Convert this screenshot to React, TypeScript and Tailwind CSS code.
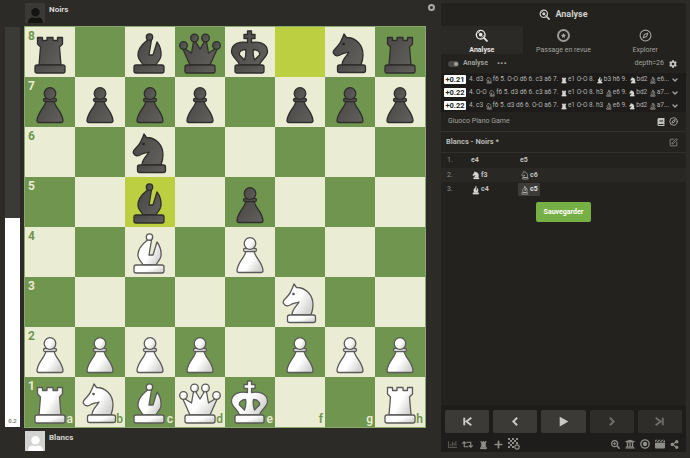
import type { ReactNode } from 'react'
import { Compass, SquarePen, ChevronDown } from 'lucide-react'
import { FaClapperboard } from 'react-icons/fa6'
import {
  FaBook,
  FaChartBar,
  FaCog,
  FaPlus,
  FaRetweet,
  FaSearchPlus,
  FaShareAlt,
  FaStar,
  FaUniversity,
  FaUser,
} from 'react-icons/fa'

type PieceType = 'p' | 'r' | 'n' | 'b' | 'q' | 'k'
type Tone = 'w' | 'b' | 'solid' | 'hollow' | 'muted'

const BASES: Record<PieceType, [number, number, number, number] | null> = {
  p: null,
  r: [10, 38, 30, 8],
  n: [12.5, 38, 28, 7.5],
  b: [9, 38, 30, 8],
  q: [10, 38, 30, 8],
  k: [10, 38, 29, 8],
}

const BODIES: Record<PieceType, string> = {
  p: 'M21 23 C21 30 13 34 12 43.5 Q12 45.5 14 45.5 H36 Q38 45.5 38 43.5 C37 34 29 30 29 23 Z',
  r: 'M12.5 10.5 H17.5 V13.5 H22 V10.5 H28 V13.5 H32.5 V10.5 H37.5 V17 L34.5 20 L36 38 H14 L15.5 20 L12.5 17 Z',
  n: 'M19 7 L21.5 10.5 C31 10.5 38 18 38 28 C38 32 37 35 36 38 H17 C17 32 22 29 24 25 C21 26 18 26 16 27.5 C13 29.5 10 29 9 27 C7.5 25.5 8 24 10 22 C13 19 15 17 16 14 C17 12 18 10 19 7 Z',
  b: 'M22.5 13 C16 18 12.5 24 13 29 C13.5 33 17 35 18 38 H31 C32 35 35.5 33 36 29 C36.5 24 35 19 32 15 L28 28 H24 L26.5 13 Z',
  q: 'M7 20 L15 38 H35 L43 20 L33.5 26 L31 12 L25 22 L19 12 L16.5 26 Z',
  k: 'M22.5 4 H26.5 V7.5 H30 V11.5 H26.5 V15.5 C32 14.5 42.5 15 42.5 24.5 C42.5 30 36 32.5 34.5 38 H14.5 C13 32.5 6.5 30 6.5 24.5 C6.5 15 17 14.5 22.5 15.5 V11.5 H19 V7.5 H22.5 Z M20.5 22.5 C17 22.5 13.5 25 14.5 28 L19.5 33 C20.5 30 21.5 26 20.5 22.5 Z M28.5 22.5 C32 22.5 35.5 25 34.5 28 L29.5 33 C28.5 30 27.5 26 28.5 22.5 Z',
}

const TONES: Record<Tone, { fill: string; stroke: string; width: number }> = {
  w: { fill: 'url(#pieceWhite)', stroke: '#5a5a58', width: 1.3 },
  b: { fill: 'url(#pieceBlack)', stroke: '#2f2e2c', width: 1.3 },
  solid: { fill: '#d8d8d4', stroke: '#d8d8d4', width: 1 },
  hollow: { fill: 'none', stroke: '#d8d8d4', width: 2.6 },
  muted: { fill: '#8e8e8a', stroke: '#8e8e8a', width: 1 },
}

function Piece({ type, tone, size = 50 }: { type: PieceType; tone: Tone; size?: number }) {
  const { fill, stroke, width } = TONES[tone]
  const base = BASES[type]
  const shared = { fill, stroke, strokeWidth: width, strokeLinejoin: 'round' as const }
  return (
    <svg viewBox="0 0 50 50" width={size} height={size} className="shrink-0">
      <path d={BODIES[type]} fillRule="evenodd" {...shared} />
      {type === 'p' && (
        <>
          <rect x="18.5" y="21.5" width="13" height="3" rx="1.5" {...shared} />
          <circle cx="25" cy="16.5" r="5.8" {...shared} />
        </>
      )}
      {type === 'b' && <circle cx="24.5" cy="10" r="3.2" {...shared} />}
      {type === 'q' && (
        <>
          <circle cx="8.5" cy="18.5" r="3.8" {...shared} />
          <circle cx="19.5" cy="11" r="3.8" {...shared} />
          <circle cx="30.5" cy="11" r="3.8" {...shared} />
          <circle cx="41.5" cy="18.5" r="3.8" {...shared} />
        </>
      )}
      {type === 'n' && (tone === 'w' || tone === 'b') && (
        <circle cx="18.5" cy="17" r="1.3" fill={tone === 'w' ? '#55534f' : '#222'} />
      )}
      {base && <rect x={base[0]} y={base[1]} width={base[2]} height={base[3]} rx="2" {...shared} />}
    </svg>
  )
}

const POSITION: Record<string, [PieceType, 'w' | 'b']> = {
  a8: ['r', 'b'], c8: ['b', 'b'], d8: ['q', 'b'], e8: ['k', 'b'], g8: ['n', 'b'], h8: ['r', 'b'],
  a7: ['p', 'b'], b7: ['p', 'b'], c7: ['p', 'b'], d7: ['p', 'b'], f7: ['p', 'b'], g7: ['p', 'b'], h7: ['p', 'b'],
  c6: ['n', 'b'], c5: ['b', 'b'], e5: ['p', 'b'],
  c4: ['b', 'w'], e4: ['p', 'w'], f3: ['n', 'w'],
  a2: ['p', 'w'], b2: ['p', 'w'], c2: ['p', 'w'], d2: ['p', 'w'], f2: ['p', 'w'], g2: ['p', 'w'], h2: ['p', 'w'],
  a1: ['r', 'w'], b1: ['n', 'w'], c1: ['b', 'w'], d1: ['q', 'w'], e1: ['k', 'w'], h1: ['r', 'w'],
}

const FILES = ['a', 'b', 'c', 'd', 'e', 'f', 'g', 'h']
const RANKS = [8, 7, 6, 5, 4, 3, 2, 1]
const HIGHLIGHTS = ['f8', 'c5']

function Board() {
  return (
    <div className="grid h-[400px] w-[400px] shrink-0 grid-cols-8 grid-rows-8 outline outline-1 outline-[#8aa76c]">
      {RANKS.flatMap((rank) =>
        FILES.map((file, fileIndex) => {
          const name = `${file}${rank}`
          const isDark = (fileIndex + rank) % 2 === 1
          const highlighted = HIGHLIGHTS.includes(name)
          const piece = POSITION[name]
          const labelColor = isDark ? 'text-[#e9ebd2]' : 'text-[#71954f]'
          return (
            <div
              key={name}
              className={`relative flex items-center justify-center ${
                highlighted ? 'bg-[#bbcf41]' : isDark ? 'bg-[#70954f]' : 'bg-[#ebecd4]'
              }`}
            >
              {piece && <Piece type={piece[0]} tone={piece[1]} />}
              {file === 'a' && (
                <span className={`absolute left-[3px] top-[2px] text-[12px] font-bold leading-[14px] ${labelColor}`}>
                  {rank}
                </span>
              )}
              {rank === 1 && (
                <span className={`absolute bottom-[1px] right-[2px] text-[12px] font-semibold leading-[14px] ${labelColor}`}>
                  {file}
                </span>
              )}
            </div>
          )
        }),
      )}
    </div>
  )
}

function Player({ name, light }: { name: string; light?: boolean }) {
  return (
    <div className="flex items-start gap-[4px] pl-[25px]">
      <div
        className={`flex h-[20px] w-[20px] items-end justify-center overflow-hidden ${
          light ? 'bg-[#d2d2d0] text-white' : 'bg-[#3a3936] text-[#141412]'
        }`}
      >
        <FaUser size={17} className="translate-y-[2px]" />
      </div>
      <span className="mt-[1px] text-[8px] font-bold leading-[11px] text-[#d6d6d2]">{name}</span>
    </div>
  )
}

function AnalysisIcon({ size = 14 }: { size?: number }) {
  return (
    <svg viewBox="0 0 24 24" width={size} height={size} fill="none" stroke="currentColor" strokeWidth="2.6">
      <circle cx="10.5" cy="10.5" r="8" />
      <path d="M16.5 16.5 L22 22" strokeLinecap="round" strokeWidth="3.4" />
      <circle cx="10.5" cy="10.5" r="3.4" fill="currentColor" stroke="none" />
      <path d="M5 8 L9 4.5 M12 16 L16 12.5" strokeWidth="1.6" />
    </svg>
  )
}

function Tab({ icon, label, active }: { icon: ReactNode; label: string; active?: boolean }) {
  return (
    <div
      className={`flex flex-1 flex-col items-center gap-[3px] pt-[3px] ${
        active ? 'bg-[#2b2a26] font-bold text-[#e6e6e2]' : 'text-[#a2a29e]'
      }`}
    >
      <span className="flex h-[15px] items-center">{icon}</span>
      <span className="text-[7px] leading-[10px]">{label}</span>
    </div>
  )
}

function Mv({ children, piece, tone, size = 10 }: { children: string; piece?: PieceType; tone?: Tone; size?: number }) {
  return (
    <span className="flex items-center">
      {piece && tone && <Piece type={piece} tone={tone} size={size} />}
      {children}
    </span>
  )
}

const LINES: { score: string; moves: [string, PieceType?, Tone?][] }[] = [
  {
    score: '+0.21',
    moves: [['4. d3'], ['f6 5. O-O d6 6. c3 a6 7.', 'n', 'hollow'], ['e1 O-O 8.', 'r', 'solid'], ['b3 h6 9.', 'b', 'solid'], ['bd2', 'n', 'solid'], ['e6...', 'b', 'hollow']],
  },
  {
    score: '+0.22',
    moves: [['4. O-O'], ['f6 5. d3 d6 6. c3 a6 7.', 'n', 'hollow'], ['e1 O-O 8. h3', 'r', 'solid'], ['e6 9.', 'b', 'hollow'], ['bd2', 'n', 'solid'], ['a7...', 'b', 'hollow']],
  },
  {
    score: '+0.22',
    moves: [['4. c3'], ['f6 5. d3 d6 6. O-O a6 7.', 'n', 'hollow'], ['e1 O-O 8. h3', 'r', 'solid'], ['e6 9.', 'b', 'hollow'], ['bd2', 'n', 'solid'], ['a7...', 'b', 'hollow']],
  },
]

function EngineLine({ score, moves }: (typeof LINES)[number]) {
  return (
    <div className="flex h-[13px] items-center bg-[#1d1c1a] pl-[3px] pr-[7px]">
      <span className="flex h-[9px] w-[22px] shrink-0 items-center justify-center rounded-[1px] bg-white text-[7.5px] font-bold text-[#222]">
        {score}
      </span>
      <div className="ml-[3px] flex min-w-0 flex-1 items-center gap-[1.5px] whitespace-nowrap text-[6.5px] text-[#b4b4b0]">
        {moves.map(([text, piece, tone], i) => (
          <Mv key={i} piece={piece} tone={tone} size={8}>
            {text}
          </Mv>
        ))}
      </div>
      <ChevronDown size={8} strokeWidth={4} className="ml-[2px] shrink-0 text-[#a5a5a1]" />
    </div>
  )
}

function NavButton({ d, dim }: { d: string; dim?: boolean }) {
  return (
    <div className={`flex h-[23px] flex-1 items-center justify-center rounded-[2px] ${dim ? 'bg-[#2e2d2a]' : 'bg-[#3b3a37]'}`}>
      <svg viewBox="0 0 24 24" width="13" height="13" fill="none" strokeWidth="3.6" stroke={dim ? '#6e6d6a' : '#c8c8c4'}>
        <path d={d} />
      </svg>
    </div>
  )
}

export default function App() {
  return (
    <div className="flex h-[458px] w-[690px] overflow-hidden bg-[#2d2b27] font-['Roboto',sans-serif]">
      <svg width="0" height="0" className="absolute">
        <defs>
          <linearGradient id="pieceWhite" x1="0" y1="0" x2="1" y2="0.6">
            <stop offset="0.6" stopColor="#ffffff" />
            <stop offset="1" stopColor="#d4d4d2" />
          </linearGradient>
          <linearGradient id="pieceBlack" x1="0" y1="0" x2="1" y2="0.6">
            <stop offset="0" stopColor="#484745" />
            <stop offset="1" stopColor="#5e5d5a" />
          </linearGradient>
        </defs>
      </svg>

      <div className="relative flex w-[441px] shrink-0 flex-col pt-[3px]">
        <Player name="Noirs" />
        <span className="absolute right-[6px] top-[4px] h-[7px] w-[7px] rounded-full border-2 border-[#a9a9a5]" />
        <div className="mt-[4px] flex">
          <div className="ml-[5px] mr-[5px] flex h-[400px] w-[15px] shrink-0 flex-col bg-[#3a3a36]">
            <div className="mt-auto flex h-[209px] items-end justify-center bg-white pb-[2px] text-[6px] font-semibold text-[#777]">
              0.2
            </div>
          </div>
          <Board />
        </div>
        <div className="mt-[4px]">
          <Player name="Blancs" light />
        </div>
      </div>

      <div className="mb-[6px] mr-[4px] mt-[3px] flex min-w-0 flex-1 flex-col bg-[#23221f]">
        <div className="flex h-[23px] items-center justify-center gap-[5px] text-[#d0d0cc]">
          <AnalysisIcon size={11} />
          <span className="text-[9px] font-bold">Analyse</span>
        </div>

        <div className="flex h-[28px]">
          <Tab active label="Analyse" icon={<AnalysisIcon size={13} />} />
          <Tab
            label="Passage en revue"
            icon={
              <span className="flex h-[13px] w-[13px] items-center justify-center rounded-full border-2 border-[#9a9a96]">
                <FaStar size={5} />
              </span>
            }
          />
          <Tab label="Explorer" icon={<Compass size={13} strokeWidth={2} />} />
        </div>

        <div className="flex h-[19px] items-center pl-[7px] pr-[9px] text-[7px] text-[#a2a29e]">
          <span className="flex h-[6px] w-[11px] items-center justify-end rounded-full bg-[#4a4946] pr-[1px]">
            <span className="h-[4px] w-[4px] rounded-full bg-[#a2a29e]" />
          </span>
          <span className="ml-[4px] font-semibold">Analyse</span>
          <span className="ml-[9px] text-[8px] font-bold leading-[8px] tracking-[0.5px]">•••</span>
          <span className="ml-auto">depth=26</span>
          <FaCog size={8} className="ml-[5px] text-[#c4c4c0]" />
        </div>

        <div className="flex flex-col">
          {LINES.map((line, i) => (
            <EngineLine key={i} {...line} />
          ))}
        </div>

        <div className="flex h-[20px] items-center border-b border-[#31302c] pl-[7px] pr-[8px] text-[7px] text-[#a2a29e]">
          <span>Giuoco Piano Game</span>
          <FaBook size={8} className="ml-auto text-[#c0c0bc]" />
          <Compass size={9} className="ml-[4px] text-[#c0c0bc]" />
        </div>

        <div className="flex h-[21px] items-center border-b border-[#31302c] pl-[5px] pr-[8px] text-[7.5px] font-bold text-[#b9b9b5]">
          <span>Blancs - Noirs *</span>
          <SquarePen size={9} className="ml-auto text-[#9a9a96]" />
        </div>

        <div className="flex flex-col text-[7px] font-bold text-[#c4c4c0]">
          <div className="flex h-[15px] items-center pl-[6px]">
            <span className="w-[24px] font-normal text-[#8f8f8b]">1.</span>
            <span className="w-[49px]">e4</span>
            <span>e5</span>
          </div>
          <div className="flex h-[14px] items-center bg-[#292825] pl-[6px]">
            <span className="w-[24px] font-normal text-[#8f8f8b]">2.</span>
            <span className="w-[49px]"><Mv piece="n" tone="solid">f3</Mv></span>
            <Mv piece="n" tone="hollow">c6</Mv>
          </div>
          <div className="flex h-[15px] items-center pl-[6px]">
            <span className="w-[24px] font-normal text-[#8f8f8b]">3.</span>
            <span className="w-[47px]"><Mv piece="b" tone="solid">c4</Mv></span>
            <span className="rounded-[1px] bg-[#3d3c39] px-[2px] py-[1px] text-[#e4e4e0]">
              <Mv piece="b" tone="hollow">c5</Mv>
            </span>
          </div>
        </div>

        <div className="mt-[5px] flex justify-center">
          <button className="flex h-[20px] w-[55px] items-center justify-center rounded-[2px] bg-[#76b044] text-[7px] font-bold text-white">
            Sauvegarder
          </button>
        </div>

        <div className="mt-auto flex flex-col bg-[#1e1d1b] px-[4px] pb-[3px] pt-[5px]">
          <div className="flex gap-[4px]">
            <NavButton d="M6 5 V19 M19 5 L10 12 L19 19" />
            <NavButton d="M15 5 L8 12 L15 19" />
            <div className="flex h-[23px] flex-1 items-center justify-center rounded-[2px] bg-[#3b3a37]">
              <svg viewBox="0 0 24 24" width="13" height="13" fill="#c8c8c4">
                <path d="M5 3 L21 12 L5 21 Z" />
              </svg>
            </div>
            <NavButton dim d="M9 5 L16 12 L9 19" />
            <NavButton dim d="M5 5 L14 12 L5 19 M18 5 V19" />
          </div>
          <div className="mt-[6px] flex h-[10px] items-center gap-[5px] px-[3px] text-[#8e8e8a]">
            <FaChartBar size={9} className="text-[#55544f]" />
            <FaRetweet size={11} />
            <Piece type="r" tone="muted" size={11} />
            <FaPlus size={9} />
            <svg viewBox="0 0 12 12" width="12" height="12" fill="currentColor">
              <path d="M0 0h2v2H0z M4 0h2v2H4z M8 0h2v2H8z M2 2h2v2H2z M6 2h2v2H6z M0 4h2v2H0z M4 4h2v2H4z M8 4h2v2H8z M2 6h2v2H2z M0 8h2v2H0z M4 8h2v2H4z" />
              <circle cx="9" cy="9" r="2.2" fill="none" stroke="currentColor" strokeWidth="1.2" />
            </svg>
            <FaSearchPlus size={9} className="ml-auto" />
            <FaUniversity size={10} />
            <svg viewBox="0 0 12 12" width="10" height="10" fill="none" stroke="currentColor" strokeWidth="1.6">
              <circle cx="6" cy="6" r="5" />
              <circle cx="6" cy="6" r="1.8" fill="currentColor" />
            </svg>
            <FaClapperboard size={10} />
            <FaShareAlt size={9} />
          </div>
        </div>
      </div>
    </div>
  )
}
